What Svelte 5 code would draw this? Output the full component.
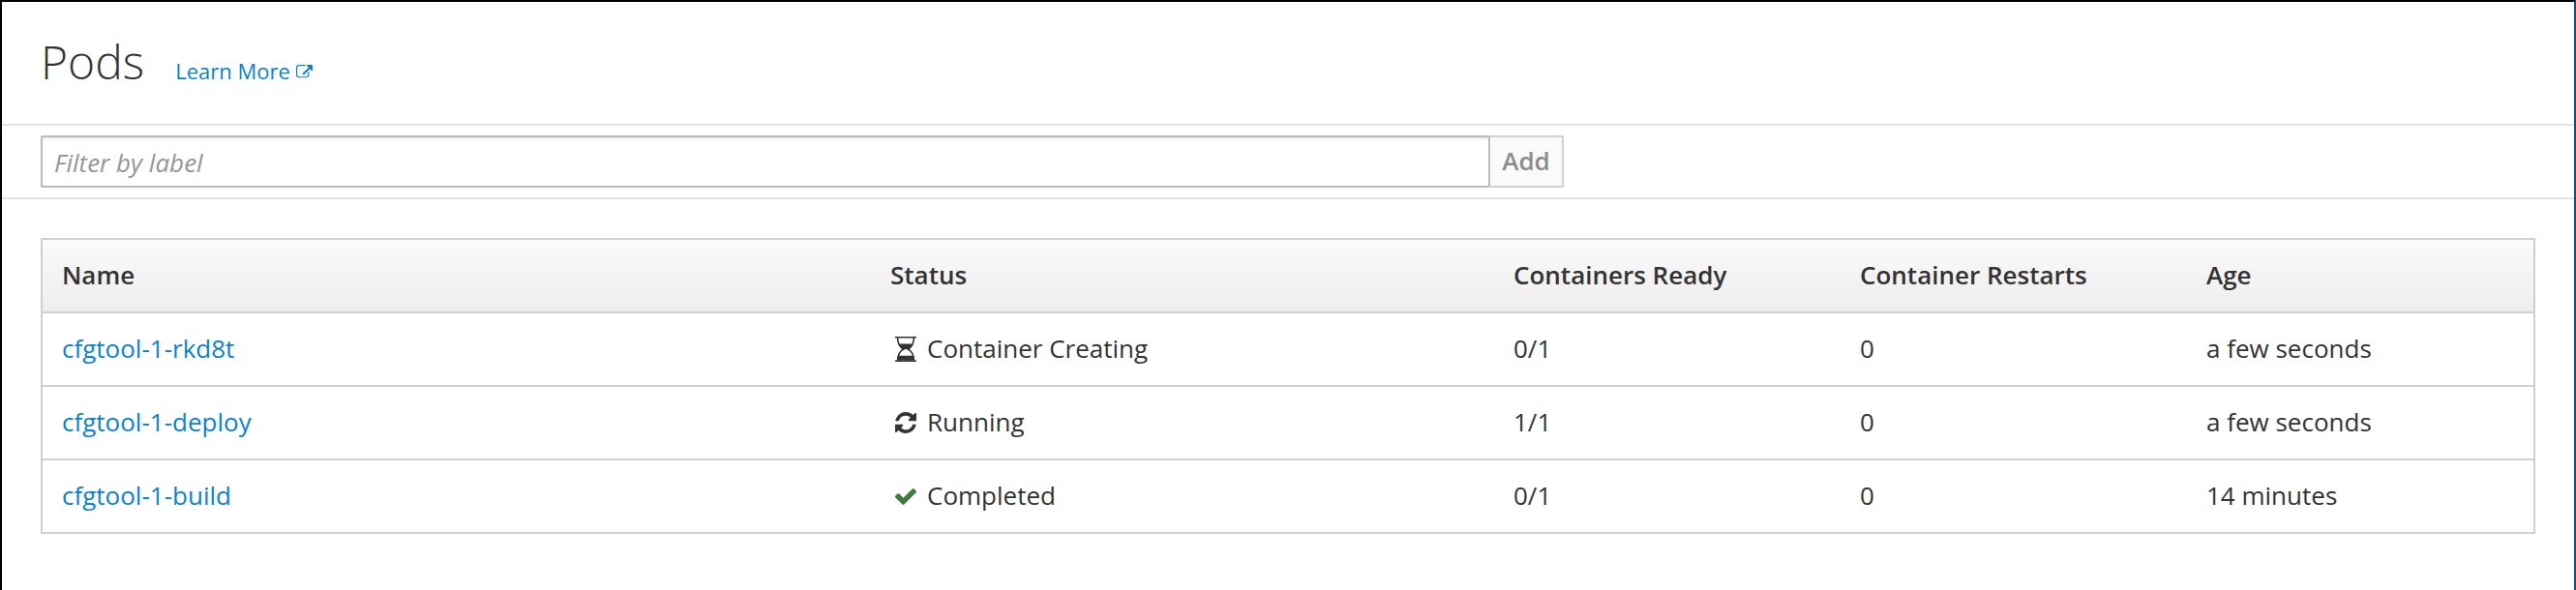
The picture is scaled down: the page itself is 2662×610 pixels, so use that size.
<script>
  const pods = [
    { name: 'cfgtool-1-rkd8t', icon: 'hourglass', status: 'Container Creating', ready: '0/1', restarts: 0, age: 'a few seconds' },
    { name: 'cfgtool-1-deploy', icon: 'refresh', status: 'Running', ready: '1/1', restarts: 0, age: 'a few seconds' },
    { name: 'cfgtool-1-build', icon: 'check', status: 'Completed', ready: '0/1', restarts: 0, age: '14 minutes' }
  ];
</script>

<div class="page">
  <header>
    <h1>Pods</h1>
    <a class="learn" href="#learn">Learn More<svg class="external" viewBox="0 0 1792 1536" aria-hidden="true"><path fill="currentColor" d="M1408 800v320q0 119-84.5 203.5t-203.5 84.5h-832q-119 0-203.5-84.5t-84.5-203.5v-832q0-119 84.5-203.5t203.5-84.5h704q14 0 23 9t9 23v64q0 14-9 23t-23 9h-704q-66 0-113 47t-47 113v832q0 66 47 113t113 47h832q66 0 113-47t47-113v-320q0-14 9-23t23-9h64q14 0 23 9t9 23zm384-736v512q0 26-19 45t-45 19-45-19l-176-176-652 652q-10 10-23 10t-23-10l-114-114q-10-10-10-23t10-23l652-652-176-176q-19-19-19-45t19-45 45-19h512q26 0 45 19t19 45z" /></svg></a>
  </header>

  <div class="filter">
    <input type="text" placeholder="Filter by label" />
    <button type="button" disabled>Add</button>
  </div>

  <main>
    <table>
      <colgroup><col class="c-name" /><col class="c-status" /><col class="c-num" /><col class="c-num" /><col /></colgroup>
      <thead>
        <tr><th>Name</th><th>Status</th><th>Containers Ready</th><th>Container Restarts</th><th>Age</th></tr>
      </thead>
      <tbody>
        {#each pods as pod}
          <tr>
            <td><a href="#pod">{pod.name}</a></td>
            <td>
              <div class="status">
                {#if pod.icon === 'hourglass'}
                  <svg viewBox="0 0 22 26" class="hourglass" aria-hidden="true">
                    <path fill="currentColor" d="M0 0h22v1.6H0zM0 24.6h22V26H0z" />
                    <path fill="none" stroke="currentColor" stroke-width="1.6" d="M2.6 1C2.6 7.5 5 11 8.7 13 5 15 2.6 18.500 2.6 25M19.400 1C19.400 7.500 17 11 13.300 13 17 15 19.400 18.500 19.400 25" />
                    <path fill="currentColor" d="M4 7.600h14C16.800 10.500 15 12.200 13 13c1 .4 1.600.8 2 1.300Q11 11.600 7 14.300c.4-.5 1-.9 2-1.300-2-.8-3.800-2.500-5-5.400zM3 19.800h16l.6 5H2.400z" />
                  </svg>
                {:else if pod.icon === 'refresh'}
                  <svg viewBox="128 128 1536 1536" class="refresh" aria-hidden="true"><path fill="currentColor" d="M1639 1056q0 5-1 7-64 268-268 434.500t-478 166.500q-146 0-282.500-55t-243.500-157l-129 129q-19 19-45 19t-45-19-19-45v-448q0-26 19-45t45-19h448q26 0 45 19t19 45-19 45l-137 137q71 66 161 102t187 36q134 0 250-65t186-179q11-17 53-117 8-23 30-23h192q13 0 22.500 9.500t9.500 22.500zm25-800v448q0 26-19 45t-45 19h-448q-26 0-45-19t-19-45 19-45l138-138q-148-137-349-137-134 0-250 65t-186 179q-11 17-53 117-8 23-30 23h-199q-13 0-22.500-9.500t-9.500-22.500v-7q65-268 270-434.500t480-166.500q146 0 284 55.500t245 156.500l130-129q19-19 45-19t45 19 19 45z" /></svg>
                {:else}
                  <svg viewBox="121 334 1550 1188" class="check" aria-hidden="true"><path fill="currentColor" d="M1671 566q0 40-28 68l-724 724-136 136q-28 28-68 28t-68-28l-136-136-362-362q-28-28-28-68t28-68l136-136q28-28 68-28t68 28l294 295 656-657q28-28 68-28t68 28l136 136q28 28 28 68z" /></svg>
                {/if}
                <span>{pod.status}</span>
              </div>
            </td>
            <td>{pod.ready}</td>
            <td>{pod.restarts}</td>
            <td>{pod.age}</td>
          </tr>
        {/each}
      </tbody>
    </table>
  </main>
</div>

<style>
  .page {
    box-sizing: border-box;
    width: 2662px;
    height: 610px;
    overflow: hidden;
    border: 2px solid #000;
    border-right-color: #0b4f85;
    border-bottom: 0;
    background: #fff;
    color: #333;
    font: 26px/40px "Open Sans", sans-serif;
  }
  a {
    color: #0a82cc;
    text-decoration: none;
  }
  header {
    box-sizing: border-box;
    height: 128px;
    padding: 29px 40px 0;
    border-bottom: 2px solid #e3e3e3;
    display: flex;
    align-items: baseline;
  }
  h1 {
    margin: 0;
    font-size: 48px;
    line-height: 66px;
    font-weight: 300;
  }
  .learn {
    margin-left: 32px;
    font-size: 22px;
  }
  .external {
    width: 17px;
    height: 14.600px;
    margin-left: 6px;
  }
  .filter {
    box-sizing: border-box;
    height: 76px;
    padding: 10px 40px;
    border-bottom: 2px solid #e3e3e3;
    display: flex;
  }
  input {
    box-sizing: border-box;
    width: 1498px;
    height: 54px;
    margin: 0;
    padding: 1px 12px 0;
    border: 2px solid #bbb;
    border-radius: 2px;
    background: #fff;
    box-shadow: inset 0 2px 2px rgba(0, 0, 0, 0.075);
    font: inherit;
  }
  input::placeholder {
    color: #969696;
    font-style: italic;
    opacity: 1;
  }
  button {
    box-sizing: border-box;
    width: 76px;
    height: 54px;
    padding: 0 0 2px;
    border: 2px solid #d1d1d1;
    border-left: 0;
    border-radius: 0 2px 2px 0;
    background: #fafafa;
    color: #8b8d8f;
    font: 600 26px/40px "Open Sans", sans-serif;
  }
  main {
    padding: 40px;
  }
  table {
    width: 2578px;
    table-layout: fixed;
    border-collapse: separate;
    border-spacing: 0;
    border: 2px solid #d1d1d1;
    border-bottom: 0;
  }
  .c-name { width: 856px; }
  .c-status { width: 644px; }
  .c-num { width: 358px; }
  th, td {
    box-sizing: border-box;
    height: 76px;
    padding: 0 20px 2px;
    border-bottom: 2px solid #d1d1d1;
    text-align: left;
    vertical-align: middle;
    font-weight: 400;
  }
  th {
    font-weight: 600;
  }
  thead tr {
    background: linear-gradient(#fafafa, #ededed);
  }
  .status {
    display: flex;
    align-items: center;
    gap: 11px;
    padding-left: 5px;
  }
  .status svg {
    width: 22px;
    flex: none;
    margin-top: 2px;
  }
  .hourglass { height: 26px; }
  .refresh { height: 22px; }
  .check {
    height: 17px;
    color: #3f7a3f;
  }
</style>
